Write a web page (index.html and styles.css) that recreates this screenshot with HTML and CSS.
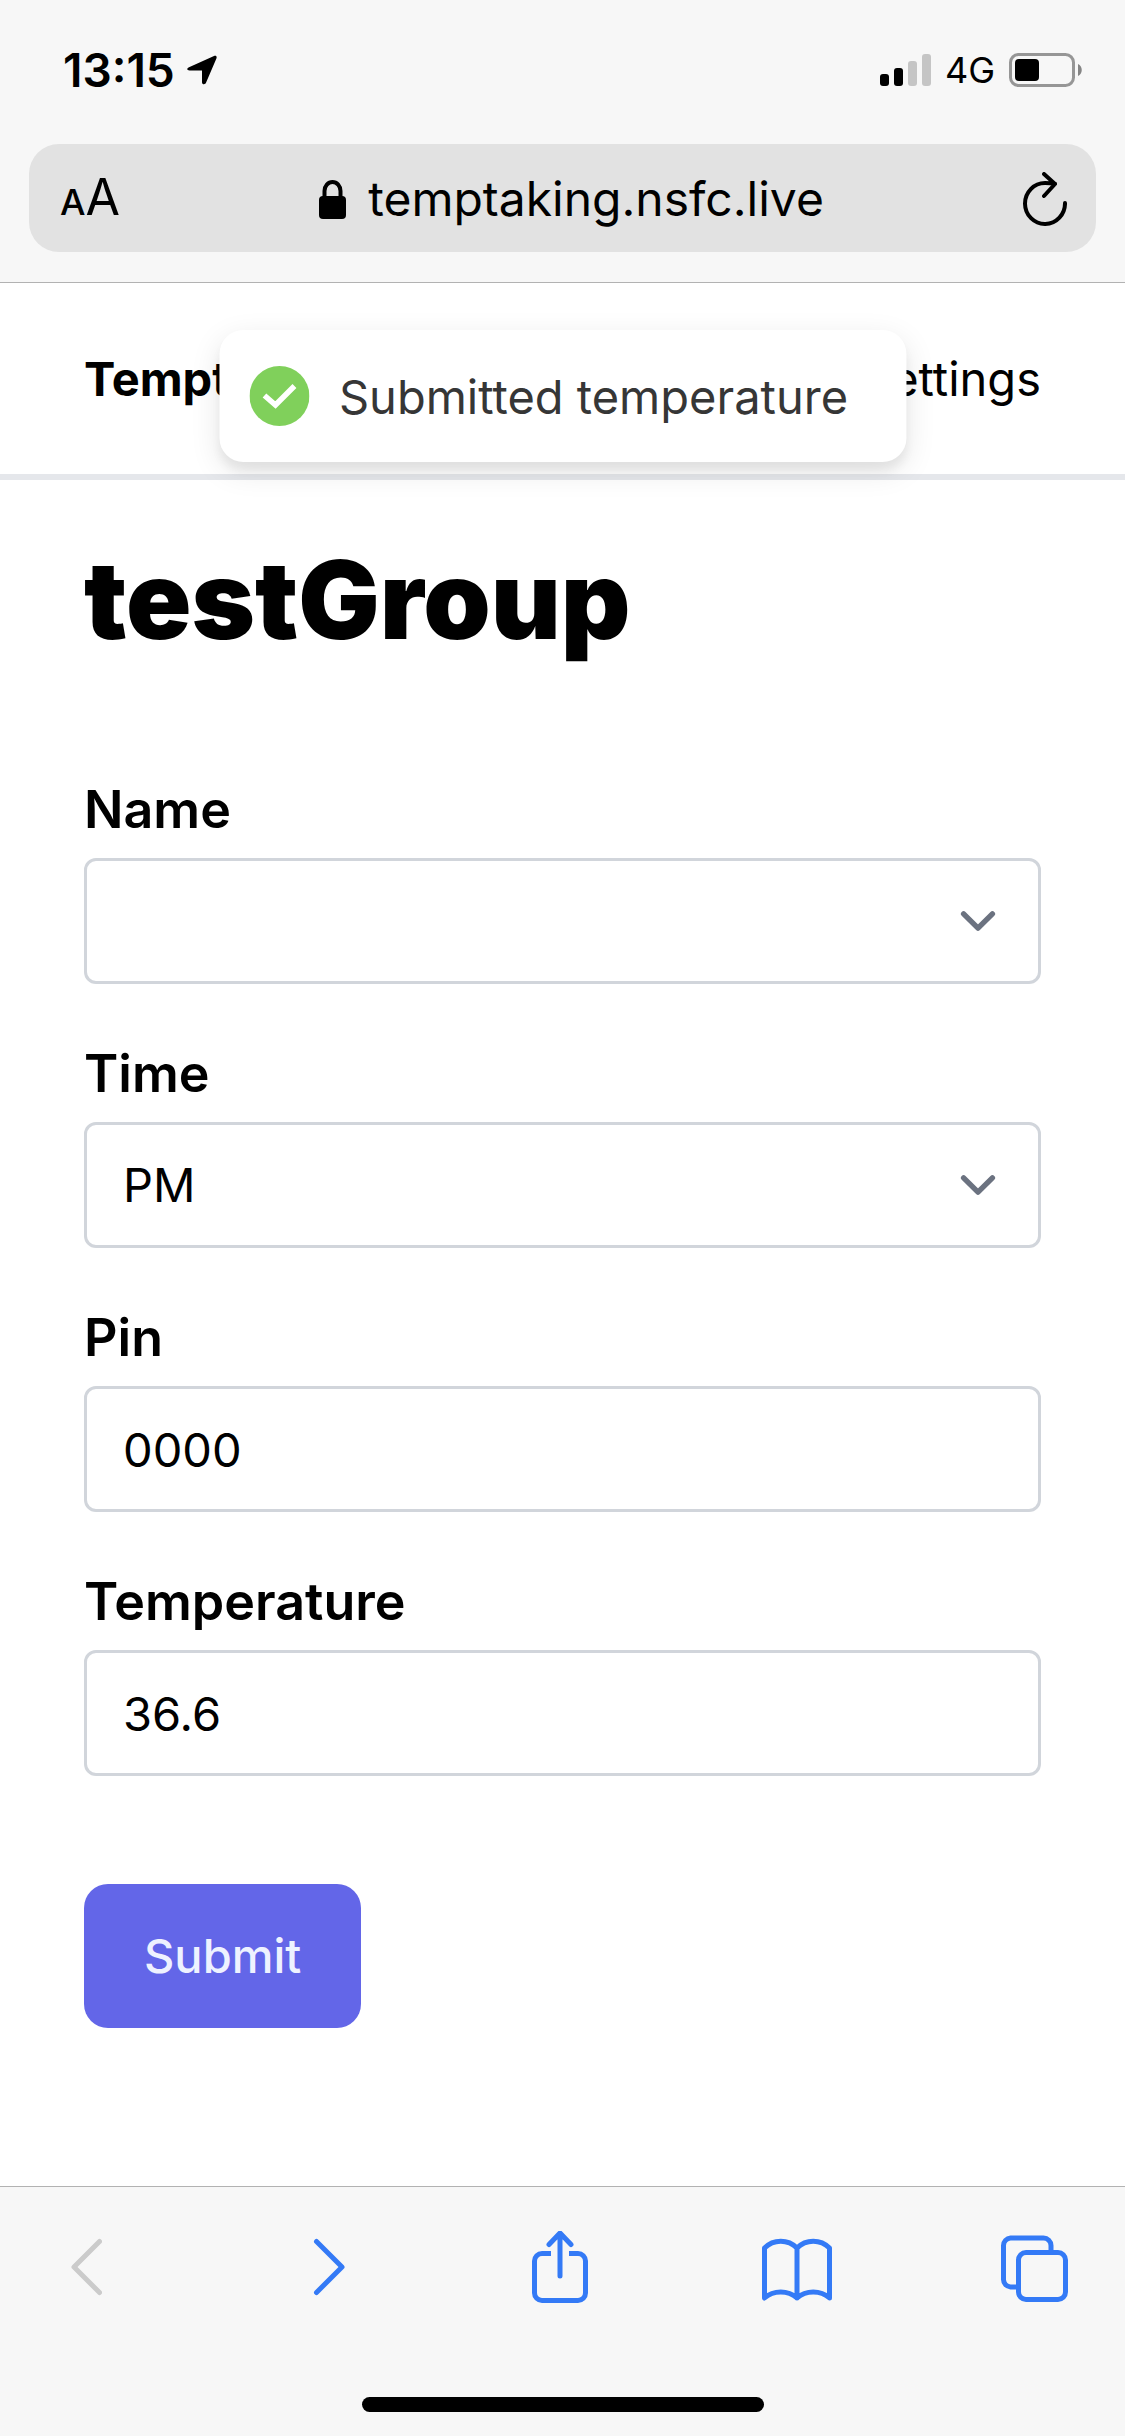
FILE: index.html
```html
<!DOCTYPE html>
<html lang="en">
<head>
  <meta charset="utf-8">
  <meta name="viewport" content="width=device-width, initial-scale=1">
  <title>testGroup</title>
  <link rel="stylesheet" href="styles.css">
</head>
<body>
  <div class="browser-top">
    <div class="status-bar">
      <div class="status-group">
        <span class="clock">13:15</span>
        <svg class="location" width="30" height="30" viewBox="0 0 30 30"><path d="M2 12.2 27 1.1C29 .3 30.200 1.500 29.400 3.400L19 27.800C18.100 30 15 29.600 15 27.200V15.500H2.600C-.3 15.500-.6 13.300 2 12.200Z"/></svg>
      </div>
      <div class="status-group status-right">
        <svg width="51" height="32" viewBox="0 0 51 32"><rect y="20" width="9" height="12" rx="3"/><rect x="14" y="14" width="9" height="18" rx="3"/><g fill="#c5c5c5"><rect x="28" y="7" width="9" height="25" rx="3"/><rect x="42" width="9" height="32" rx="3"/></g></svg>
        <span class="network">4G</span>
        <svg width="73" height="34" viewBox="0 0 73 34"><rect x="1.500" y="1.500" width="63" height="31" rx="8" fill="none" stroke="#969696" stroke-width="3"/><rect x="6" y="6" width="24" height="22" rx="4"/><path d="M69 11c5 2 5 10 0 12z" fill="#858585"/></svg>
      </div>
    </div>
    <div class="address-bar">
      <button class="icon-button text-size" type="button" aria-label="Text size"><span class="small-a">A</span><span>A</span></button>
      <div class="address">
        <svg width="27" height="39" viewBox="0 0 27 39"><rect y="16" width="27" height="23" rx="4"/><path d="M5.500 18V11a8 9 0 0 1 16 0v7" fill="none" stroke="#000" stroke-width="4"/></svg>
        <span>temptaking.nsfc.live</span>
      </div>
      <button class="icon-button" type="button" aria-label="Reload"><svg width="44" height="54" viewBox="0 0 44 54" fill="none" stroke="#000" stroke-width="4" stroke-linecap="round" stroke-linejoin="round"><path d="M42 31a20 20.500 0 1 1-20-20c4 0 7 .3 10 .8M21 2l11 10-11 12"/></svg></button>
    </div>
  </div>

  <header class="site-header">
    <a class="brand" href="#">Temptaking</a>
    <a href="#">Settings</a>
    <div class="toast" role="status">
      <svg width="60" height="60" viewBox="0 0 60 60"><circle cx="30" cy="30" r="30" fill="#80d05b"/><path d="M15 29.500 26 39 45 20" fill="none" stroke="#fff" stroke-width="5.500"/></svg>
      <span>Submitted temperature</span>
    </div>
  </header>

  <main class="content">
    <h1>testGroup</h1>
    <form>
      <div class="fields">
        <div class="field">
          <label for="name">Name</label>
          <div class="select">
            <select id="name"><option></option></select>
            <svg width="72" height="72" viewBox="0 0 20 20"><path d="M6 8l4 4 4-4"/></svg>
          </div>
        </div>
        <div class="field">
          <label for="time">Time</label>
          <div class="select">
            <select id="time"><option>AM</option><option selected>PM</option></select>
            <svg width="72" height="72" viewBox="0 0 20 20"><path d="M6 8l4 4 4-4"/></svg>
          </div>
        </div>
        <div class="field">
          <label for="pin">Pin</label>
          <input id="pin" type="text" inputmode="numeric" value="0000">
        </div>
        <div class="field">
          <label for="temperature">Temperature</label>
          <input id="temperature" type="text" inputmode="decimal" value="36.6">
        </div>
      </div>
      <button class="submit" type="submit">Submit</button>
    </form>
  </main>

  <footer class="browser-bottom">
    <nav class="toolbar" aria-label="Browser">
      <button class="icon-button disabled" type="button" aria-label="Back"><svg width="31" height="72" viewBox="0 0 31 72"><path d="M28.500 10.500 3 36l25.500 25.500"/></svg></button>
      <button class="icon-button" type="button" aria-label="Forward"><svg width="43" height="72" viewBox="0 0 43 72"><path d="M14.500 10.500 40 36 14.500 61.500"/></svg></button>
      <button class="icon-button" type="button" aria-label="Share"><svg width="56" height="72" viewBox="0 0 56 72"><path d="M19 22.500H10a7.500 7.500 0 0 0-7.500 7.500v32a7.500 7.500 0 0 0 7.500 7.500h36a7.500 7.500 0 0 0 7.500-7.500v-32a7.500 7.500 0 0 0-7.500-7.500h-9" stroke-linecap="butt"/><path d="M28 45V3M17 13.500 28 2l11 11.500"/></svg></button>
      <button class="icon-button" type="button" aria-label="Bookmarks"><svg width="70" height="72" viewBox="0 0 70 72"><path d="M2.500 17c9-9 23.500-9 32.500 0 9-9 23.500-9 32.500 0v50c-9-8-23.500-8-32.500 0-9-8-23.500-8-32.500 0zM35 17v50"/></svg></button>
      <button class="icon-button" type="button" aria-label="Tabs"><svg width="67" height="72" viewBox="0 0 67 72"><rect x="17.500" y="21.500" width="47" height="47" rx="7.500"/><path d="M50 21v-6.500a7.500 7.500 0 0 0-7.500-7.500H9.500A7.500 7.500 0 0 0 2.500 14.500v34A7.500 7.500 0 0 0 9.500 56H17"/></svg></button>
    </nav>
    <div class="home-indicator"></div>
  </footer>
</body>
</html>
```
FILE: styles.css
```css
* {
  box-sizing: border-box;
}

body {
  margin: 0;
  min-height: 100vh;
  display: flex;
  flex-direction: column;
  background: #fff;
  color: #000;
  font-family: Inter, "Liberation Sans", sans-serif;
  font-size: 47px;
  line-height: 72px;
}

svg {
  display: block;
  flex: none;
}

a {
  color: inherit;
  text-decoration: none;
}

button,
input,
select {
  font: inherit;
  color: inherit;
}

h1 {
  margin: 0 0 108px;
  font-size: 108px;
  font-weight: 900;
  line-height: 120px;
}

.icon-button {
  display: flex;
  margin: 0;
  padding: 0;
  border: 0;
  background: none;
}

.browser-top {
  padding: 0 29px 30px;
  background: #f7f7f7;
  border-bottom: 1px solid #b2b2b2;
}

.status-bar {
  display: flex;
  align-items: center;
  justify-content: space-between;
  padding: 34px 14px 38px 34px;
}

.status-group {
  display: flex;
  align-items: center;
  gap: 12px;
}

.status-right {
  gap: 14px;
}

.clock {
  font-size: 46px;
  font-weight: 600;
}

.network {
  font-size: 36px;
}

.address-bar {
  display: flex;
  align-items: center;
  justify-content: space-between;
  height: 108px;
  padding: 2px 29px 0 31px;
  border-radius: 30px;
  background: #e2e2e2;
}

.text-size {
  align-items: baseline;
  font-size: 50px;
}

.small-a {
  font-size: 36px;
  font-weight: 500;
}

.address {
  display: flex;
  align-items: center;
  gap: 22px;
  font-size: 48px;
}

.site-header {
  position: relative;
  display: flex;
  justify-content: space-between;
  padding: 60px 84px;
  border-bottom: 6px solid #e5e7eb;
  line-height: 71px;
}

.brand {
  font-weight: 700;
}

.toast {
  position: absolute;
  top: 47px;
  left: 50%;
  transform: translateX(-50%);
  display: flex;
  align-items: center;
  gap: 30px;
  height: 132px;
  padding: 0 58px 0 30px;
  border-radius: 24px;
  background: #fff;
  box-shadow: 0 9px 30px rgba(0, 0, 0, 0.1), 0 9px 9px rgba(0, 0, 0, 0.05);
  color: #363636;
  white-space: nowrap;
}

.content {
  flex: 1;
  padding: 60px 84px 108px;
}

.fields {
  display: grid;
  gap: 48px;
  margin-bottom: 108px;
}

.field {
  display: grid;
  gap: 6px;
}

.field label {
  font-size: 52px;
  font-weight: 600;
  line-height: 84px;
}

.field input,
.field select {
  width: 100%;
  height: 126px;
  margin: 0;
  padding: 0 36px;
  border: 3px solid #d1d5db;
  border-radius: 12px;
  background: #fff;
  appearance: none;
}

.select {
  display: grid;
  align-items: center;
}

.select > * {
  grid-area: 1 / 1;
}

.select svg {
  justify-self: end;
  margin-right: 27px;
  fill: none;
  stroke: #6b7280;
  stroke-width: 1.5;
  stroke-linecap: round;
  stroke-linejoin: round;
  pointer-events: none;
}

.submit {
  display: block;
  padding: 36px 60px;
  border: 0;
  border-radius: 24px;
  background: #6366e8;
  color: #eef2ff;
  font-weight: 500;
}

.browser-bottom {
  padding-bottom: 24px;
  background: #f7f7f7;
  border-top: 1px solid #b2b2b2;
}

.toolbar {
  display: flex;
  justify-content: space-between;
  padding: 44px 55px 94px 50px;
}

.toolbar .icon-button {
  width: 72px;
  justify-content: center;
}

.toolbar svg {
  fill: none;
  stroke: #347af6;
  stroke-width: 5;
  stroke-linecap: round;
  stroke-linejoin: round;
}

.toolbar .disabled svg {
  stroke: #cbcbcb;
}

.home-indicator {
  width: 402px;
  height: 15px;
  margin: 0 auto;
  border-radius: 8px;
  background: #000;
}
```
